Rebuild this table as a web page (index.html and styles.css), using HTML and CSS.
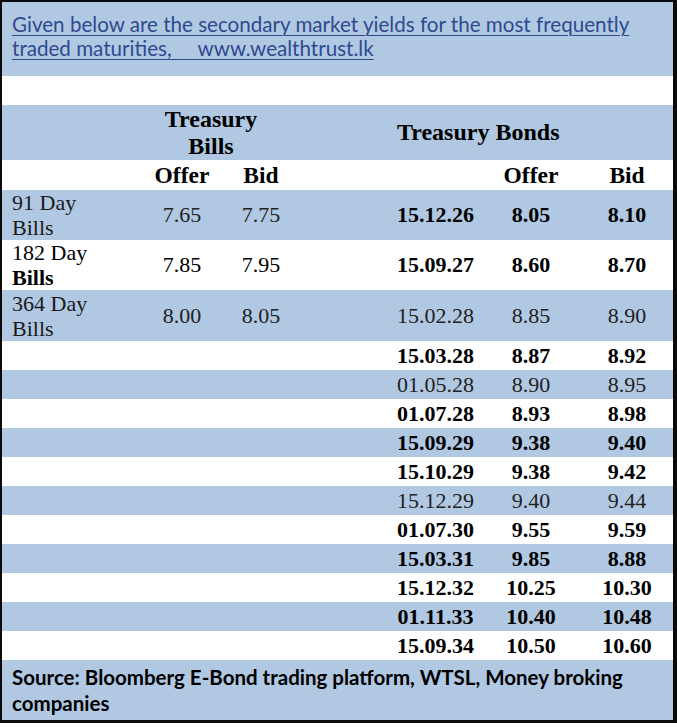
FILE: index.html
```html
<!DOCTYPE html>
<html>
<head>
<meta charset="utf-8">
<link rel="stylesheet" href="styles.css">
</head>
<body>
<div class="frame">
<table class="yields">
<colgroup>
<col class="c-label"><col class="c-boff"><col class="c-bbid"><col class="c-gap"><col class="c-date"><col class="c-off"><col class="c-bid">
</colgroup>
<tbody>
<tr class="intro blue"><td colspan="7"><p class="intro-text">Given below are the secondary market yields for the most frequently traded maturities,&nbsp;&nbsp;&nbsp;&nbsp; www.wealthtrust.lk</p></td></tr>
<tr class="spacer"><td colspan="7"></td></tr>
<tr class="head blue">
<td></td>
<td colspan="2" class="h-bills">Treasury<br>Bills</td>
<td></td>
<td colspan="3" class="h-bonds">Treasury Bonds</td>
</tr>
<tr class="sub">
<td></td><td class="num">Offer</td><td class="num">Bid</td><td></td><td></td><td class="num">Offer</td><td class="num">Bid</td>
</tr>
<tr class="bill blue">
<td class="label">91 Day<br>Bills</td><td class="num reg">7.65</td><td class="num reg">7.75</td><td></td>
<td class="num b">15.12.26</td><td class="num b">8.05</td><td class="num b">8.10</td>
</tr>
<tr class="bill">
<td class="label dark">182 Day<br><b>Bills</b></td><td class="num reg dark">7.85</td><td class="num reg dark">7.95</td><td></td>
<td class="num b">15.09.27</td><td class="num b">8.60</td><td class="num b">8.70</td>
</tr>
<tr class="bill last blue">
<td class="label">364 Day<br>Bills</td><td class="num reg">8.00</td><td class="num reg">8.05</td><td></td>
<td class="num reg">15.02.28</td><td class="num reg">8.85</td><td class="num reg">8.90</td>
</tr>
<tr class="bond"><td colspan="4"></td><td class="num b">15.03.28</td><td class="num b">8.87</td><td class="num b">8.92</td></tr>
<tr class="bond blue"><td colspan="4"></td><td class="num reg">01.05.28</td><td class="num reg">8.90</td><td class="num reg">8.95</td></tr>
<tr class="bond"><td colspan="4"></td><td class="num b">01.07.28</td><td class="num b">8.93</td><td class="num b">8.98</td></tr>
<tr class="bond blue"><td colspan="4"></td><td class="num b">15.09.29</td><td class="num b">9.38</td><td class="num b">9.40</td></tr>
<tr class="bond"><td colspan="4"></td><td class="num b">15.10.29</td><td class="num b">9.38</td><td class="num b">9.42</td></tr>
<tr class="bond blue"><td colspan="4"></td><td class="num reg">15.12.29</td><td class="num reg">9.40</td><td class="num reg">9.44</td></tr>
<tr class="bond"><td colspan="4"></td><td class="num b">01.07.30</td><td class="num b">9.55</td><td class="num b">9.59</td></tr>
<tr class="bond blue"><td colspan="4"></td><td class="num b">15.03.31</td><td class="num b">9.85</td><td class="num b">8.88</td></tr>
<tr class="bond"><td colspan="4"></td><td class="num b">15.12.32</td><td class="num b">10.25</td><td class="num b">10.30</td></tr>
<tr class="bond blue"><td colspan="4"></td><td class="num b">01.11.33</td><td class="num b">10.40</td><td class="num b">10.48</td></tr>
<tr class="bond"><td colspan="4"></td><td class="num b">15.09.34</td><td class="num b">10.50</td><td class="num b">10.60</td></tr>
<tr class="foot blue"><td colspan="7"><p class="foot-text">Source: Bloomberg E-Bond trading platform, WTSL, Money broking companies</p></td></tr>
</tbody>
</table>
</div>
</body>
</html>
```

FILE: styles.css
```css
html, body {
  margin: 0;
  padding: 0;
  background: #ffffff;
}
.frame {
  width: 671px;
  border-left: 2px solid #0a0a0a;
  border-top: 2px solid #0a0a0a;
  border-right: 4px solid #0a0a0a;
  border-bottom: 3px solid #0a0a0a;
}
.yields {
  width: 671px;
  border-collapse: collapse;
  border-spacing: 0;
  table-layout: fixed;
  font-family: "Liberation Serif", "Times New Roman", serif;
  font-size: 22px;
  color: #111;
}
.yields td {
  padding: 0;
  vertical-align: middle;
}
.c-label { width: 141px; }
.c-boff { width: 78px; }
.c-bbid { width: 80px; }
.c-gap { width: 89px; }
.c-date { width: 91px; }
.c-off { width: 100px; }
.c-bid { width: 92px; }

.blue td { background: #b1c8e3; }

.intro td { height: 74px; vertical-align: top; }
.intro-text {
  margin: 0;
  padding: 10px 10px 0 10px;
  font-family: Lato, "Open Sans", sans-serif;
  font-size: 20.6px;
  line-height: 24px;
  color: #2e4a8e;
  text-decoration: underline;
  text-decoration-thickness: 1px;
  text-underline-offset: 3px;
}
.spacer td { height: 29px; }
.head td { height: 55px; font-weight: bold; font-size: 24px; line-height: 27px; color: #000; }
.yields .h-bills { text-align: center; padding-right: 22px; }
.yields .h-bonds { text-align: left; padding-left: 7px; }
.sub td { height: 30px; font-weight: bold; font-size: 23.5px; color: #000; }
.bill td { height: 50px; }
.bill.last td { height: 51px; }
.bond td { height: 29px; }
.yields .label {
  padding-left: 10px;
  line-height: 25px;
  color: #1a1a1a;
}
.num { text-align: center; }
.reg { font-weight: normal; color: #222; }
.yields .dark { color: #000; }
.b { font-weight: bold; color: #000; }
.foot td { height: 60px; vertical-align: top; }
.foot-text {
  margin: 0;
  padding: 4px 10px 0 10px;
  font-family: Lato, "Open Sans", sans-serif;
  font-weight: bold;
  font-size: 20.5px;
  line-height: 26px;
  color: #000;
}
```
